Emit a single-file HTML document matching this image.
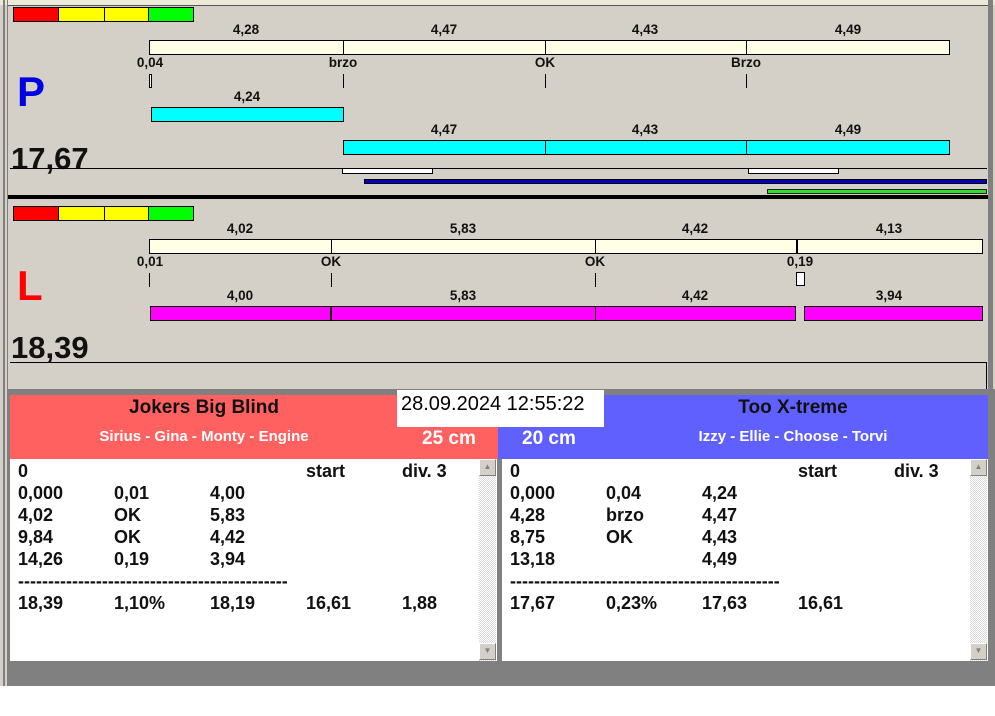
<!DOCTYPE html>
<html><head><meta charset="utf-8"><style>
*{margin:0;padding:0;box-sizing:border-box}
body{width:995px;height:716px;background:#fff;position:relative;overflow:hidden;font-family:"Liberation Sans",Arial,sans-serif}
div{position:absolute}
.lb{font-size:13.5px;font-weight:bold;color:#111;transform:translateX(-50%);white-space:nowrap;line-height:14px}
.bar{border:1px solid #000;height:15px}
.tk{width:1px;background:#000;height:14px}
.t{font-size:18px;font-weight:bold;color:#111;line-height:22px;white-space:nowrap}
</style></head><body>
<div style="left:0;top:0;width:995px;height:686px;background:#d4d0c8"></div>
<div style="left:0;top:0;width:995px;height:5px;background:#ece9d8"></div>
<div style="top:5px;left:8px;width:980px;height:1px;background:#555"></div>
<div style="left:3px;top:0;width:2px;height:686px;background:#808080"></div>
<div style="left:7px;top:0;width:1px;height:686px;background:#808080"></div>
<div style="left:988px;top:0;width:5px;height:395px;background:#808080"></div>

<div style="left:13px;top:7px;width:46px;height:15px;background:#f00;border:1px solid #000"></div>
<div style="left:58px;top:7px;width:47px;height:15px;background:#ff0;border:1px solid #000"></div>
<div style="left:104px;top:7px;width:45px;height:15px;background:#ff0;border:1px solid #000"></div>
<div style="left:148px;top:7px;width:46px;height:15px;background:#0f0;border:1px solid #000"></div>

<div class="lb" style="left:246px;top:23px">4,28</div>
<div class="lb" style="left:444px;top:23px">4,47</div>
<div class="lb" style="left:645px;top:23px">4,43</div>
<div class="lb" style="left:848px;top:23px">4,49</div>
<div class="bar" style="left:149px;top:40px;width:801px;background:#ffffe6"></div>
<div class="tk" style="left:343px;top:40px;height:15px"></div>
<div class="tk" style="left:545px;top:40px;height:15px"></div>
<div class="tk" style="left:746px;top:40px;height:15px"></div>
<div class="lb" style="left:150px;top:56px">0,04</div>
<div class="lb" style="left:343px;top:56px">brzo</div>
<div class="lb" style="left:545px;top:56px">OK</div>
<div class="lb" style="left:746px;top:56px">Brzo</div>
<div style="left:149px;top:74px;width:3px;height:14px;border:1px solid #000;background:#fff"></div>
<div class="tk" style="left:343px;top:74px"></div>
<div class="tk" style="left:545px;top:74px"></div>
<div class="tk" style="left:746px;top:74px"></div>
<div style="left:17px;top:68px;font-size:42px;font-weight:bold;color:#0000e0;line-height:48px">P</div>
<div class="lb" style="left:247px;top:90px">4,24</div>
<div class="bar" style="left:151px;top:107px;width:193px;background:#0ff"></div>
<div class="lb" style="left:444px;top:123px">4,47</div>
<div class="lb" style="left:645px;top:123px">4,43</div>
<div class="lb" style="left:848px;top:123px">4,49</div>
<div class="bar" style="left:343px;top:140px;width:607px;background:#0ff"></div>
<div class="tk" style="left:545px;top:140px;height:15px"></div>
<div class="tk" style="left:746px;top:140px;height:15px"></div>
<div style="left:11px;top:141px;font-size:31px;font-weight:bold;color:#111;line-height:36px">17,67</div>
<div style="left:10px;top:168px;width:977px;height:1px;background:#000"></div>
<div style="left:342px;top:168px;width:91px;height:6px;border:1px solid #000;background:#fff"></div>
<div style="left:748px;top:168px;width:91px;height:6px;border:1px solid #000;background:#fff"></div>
<div style="left:364px;top:179px;width:623px;height:5px;background:#0000c0;border:1px solid #000"></div>
<div style="left:767px;top:189px;width:220px;height:5px;background:#2ee02e;border:1px solid #222"></div>
<div style="left:8px;top:195px;width:980px;height:4px;background:#000"></div>

<div style="left:13px;top:206px;width:46px;height:15px;background:#f00;border:1px solid #000"></div>
<div style="left:58px;top:206px;width:47px;height:15px;background:#ff0;border:1px solid #000"></div>
<div style="left:104px;top:206px;width:45px;height:15px;background:#ff0;border:1px solid #000"></div>
<div style="left:148px;top:206px;width:46px;height:15px;background:#0f0;border:1px solid #000"></div>
<div class="lb" style="left:240px;top:222px">4,02</div>
<div class="lb" style="left:463px;top:222px">5,83</div>
<div class="lb" style="left:695px;top:222px">4,42</div>
<div class="lb" style="left:889px;top:222px">4,13</div>
<div class="bar" style="left:149px;top:239px;width:834px;background:#ffffe6"></div>
<div class="tk" style="left:331px;top:239px;height:15px"></div>
<div class="tk" style="left:595px;top:239px;height:15px"></div>
<div class="tk" style="left:796px;top:239px;height:15px;width:2px"></div>
<div class="lb" style="left:150px;top:255px">0,01</div>
<div class="lb" style="left:331px;top:255px">OK</div>
<div class="lb" style="left:595px;top:255px">OK</div>
<div class="lb" style="left:800px;top:255px">0,19</div>
<div class="tk" style="left:149px;top:273px"></div>
<div class="tk" style="left:331px;top:273px"></div>
<div class="tk" style="left:595px;top:273px"></div>
<div style="left:796px;top:272px;width:9px;height:14px;border:1px solid #000;background:#fff"></div>
<div style="left:17px;top:262px;font-size:42px;font-weight:bold;color:#f00;line-height:48px">L</div>
<div class="lb" style="left:240px;top:289px">4,00</div>
<div class="lb" style="left:463px;top:289px">5,83</div>
<div class="lb" style="left:695px;top:289px">4,42</div>
<div class="lb" style="left:889px;top:289px">3,94</div>
<div class="bar" style="left:150px;top:306px;width:646px;background:#f0f"></div>
<div class="tk" style="left:330px;top:306px;height:15px;width:2px"></div>
<div class="tk" style="left:595px;top:306px;height:15px"></div>
<div class="bar" style="left:804px;top:306px;width:179px;background:#f0f"></div>
<div style="left:11px;top:330px;font-size:31px;font-weight:bold;color:#111;line-height:36px">18,39</div>
<div style="left:10px;top:362px;width:977px;height:1px;background:#000"></div>
<div style="left:986px;top:362px;width:1px;height:27px;background:#000"></div>

<div style="left:8px;top:389px;width:987px;height:297px;background:#808080"></div>
<div style="left:10px;top:395px;width:488px;height:64px;background:#ff6060"></div>
<div style="left:498px;top:395px;width:490px;height:64px;background:#6060ff"></div>
<div style="left:397px;top:390px;width:207px;height:37px;background:#fff"></div>
<div style="left:401px;top:392px;font-size:20px;color:#000;line-height:24px">28.09.2024 12:55:22</div>
<div style="left:10px;top:397px;width:388px;text-align:center;font-size:19px;font-weight:bold;color:#111;line-height:22px">Jokers Big Blind</div>
<div style="left:10px;top:428px;width:388px;text-align:center;font-size:15px;font-weight:bold;color:#fff;line-height:18px">Sirius - Gina - Monty - Engine</div>
<div style="left:422px;top:428px;font-size:19px;font-weight:bold;color:#fff;line-height:22px">25 cm</div>
<div style="left:522px;top:428px;font-size:19px;font-weight:bold;color:#fff;line-height:22px">20 cm</div>
<div style="left:598px;top:397px;width:390px;text-align:center;font-size:19px;font-weight:bold;color:#111;line-height:22px">Too X-treme</div>
<div style="left:598px;top:428px;width:390px;text-align:center;font-size:15px;font-weight:bold;color:#fff;line-height:18px">Izzy - Ellie - Choose - Torvi</div>

<div style="left:10px;top:459px;width:487px;height:202px;background:#fff"></div>
<div style="left:479px;top:459px;width:17px;height:202px;background:repeating-conic-gradient(#d8d8d8 0 25%,#fff 0 50%) 0 0/2px 2px"></div>
<div style="left:479px;top:459px;width:17px;height:17px;background:#d4d0c8;border:1px solid #fff;border-right-color:#808080;border-bottom-color:#808080;font-size:8px;color:#808080;text-align:center;line-height:14px">▲</div>
<div style="left:479px;top:643px;width:17px;height:17px;background:#d4d0c8;border:1px solid #fff;border-right-color:#808080;border-bottom-color:#808080;font-size:8px;color:#808080;text-align:center;line-height:14px">▼</div>
<div style="left:502px;top:459px;width:486px;height:202px;background:#fff"></div>
<div style="left:970px;top:459px;width:17px;height:202px;background:repeating-conic-gradient(#d8d8d8 0 25%,#fff 0 50%) 0 0/2px 2px"></div>
<div style="left:970px;top:459px;width:17px;height:17px;background:#d4d0c8;border:1px solid #fff;border-right-color:#808080;border-bottom-color:#808080;font-size:8px;color:#808080;text-align:center;line-height:14px">▲</div>
<div style="left:970px;top:643px;width:17px;height:17px;background:#d4d0c8;border:1px solid #fff;border-right-color:#808080;border-bottom-color:#808080;font-size:8px;color:#808080;text-align:center;line-height:14px">▼</div>

<div class="t" style="left:18px;top:460px">0</div>
<div class="t" style="left:306px;top:460px">start</div>
<div class="t" style="left:402px;top:460px">div. 3</div>
<div class="t" style="left:18px;top:482px">0,000</div><div class="t" style="left:114px;top:482px">0,01</div><div class="t" style="left:210px;top:482px">4,00</div>
<div class="t" style="left:18px;top:504px">4,02</div><div class="t" style="left:114px;top:504px">OK</div><div class="t" style="left:210px;top:504px">5,83</div>
<div class="t" style="left:18px;top:526px">9,84</div><div class="t" style="left:114px;top:526px">OK</div><div class="t" style="left:210px;top:526px">4,42</div>
<div class="t" style="left:18px;top:548px">14,26</div><div class="t" style="left:114px;top:548px">0,19</div><div class="t" style="left:210px;top:548px">3,94</div>
<div class="t" style="left:18px;top:570px;letter-spacing:0px">---------------------------------------------</div>
<div class="t" style="left:18px;top:592px">18,39</div><div class="t" style="left:114px;top:592px">1,10%</div><div class="t" style="left:210px;top:592px">18,19</div><div class="t" style="left:306px;top:592px">16,61</div><div class="t" style="left:402px;top:592px">1,88</div>

<div class="t" style="left:510px;top:460px">0</div>
<div class="t" style="left:798px;top:460px">start</div>
<div class="t" style="left:894px;top:460px">div. 3</div>
<div class="t" style="left:510px;top:482px">0,000</div><div class="t" style="left:606px;top:482px">0,04</div><div class="t" style="left:702px;top:482px">4,24</div>
<div class="t" style="left:510px;top:504px">4,28</div><div class="t" style="left:606px;top:504px">brzo</div><div class="t" style="left:702px;top:504px">4,47</div>
<div class="t" style="left:510px;top:526px">8,75</div><div class="t" style="left:606px;top:526px">OK</div><div class="t" style="left:702px;top:526px">4,43</div>
<div class="t" style="left:510px;top:548px">13,18</div><div class="t" style="left:702px;top:548px">4,49</div>
<div class="t" style="left:510px;top:570px;letter-spacing:0px">---------------------------------------------</div>
<div class="t" style="left:510px;top:592px">17,67</div><div class="t" style="left:606px;top:592px">0,23%</div><div class="t" style="left:702px;top:592px">17,63</div><div class="t" style="left:798px;top:592px">16,61</div>
</body></html>
